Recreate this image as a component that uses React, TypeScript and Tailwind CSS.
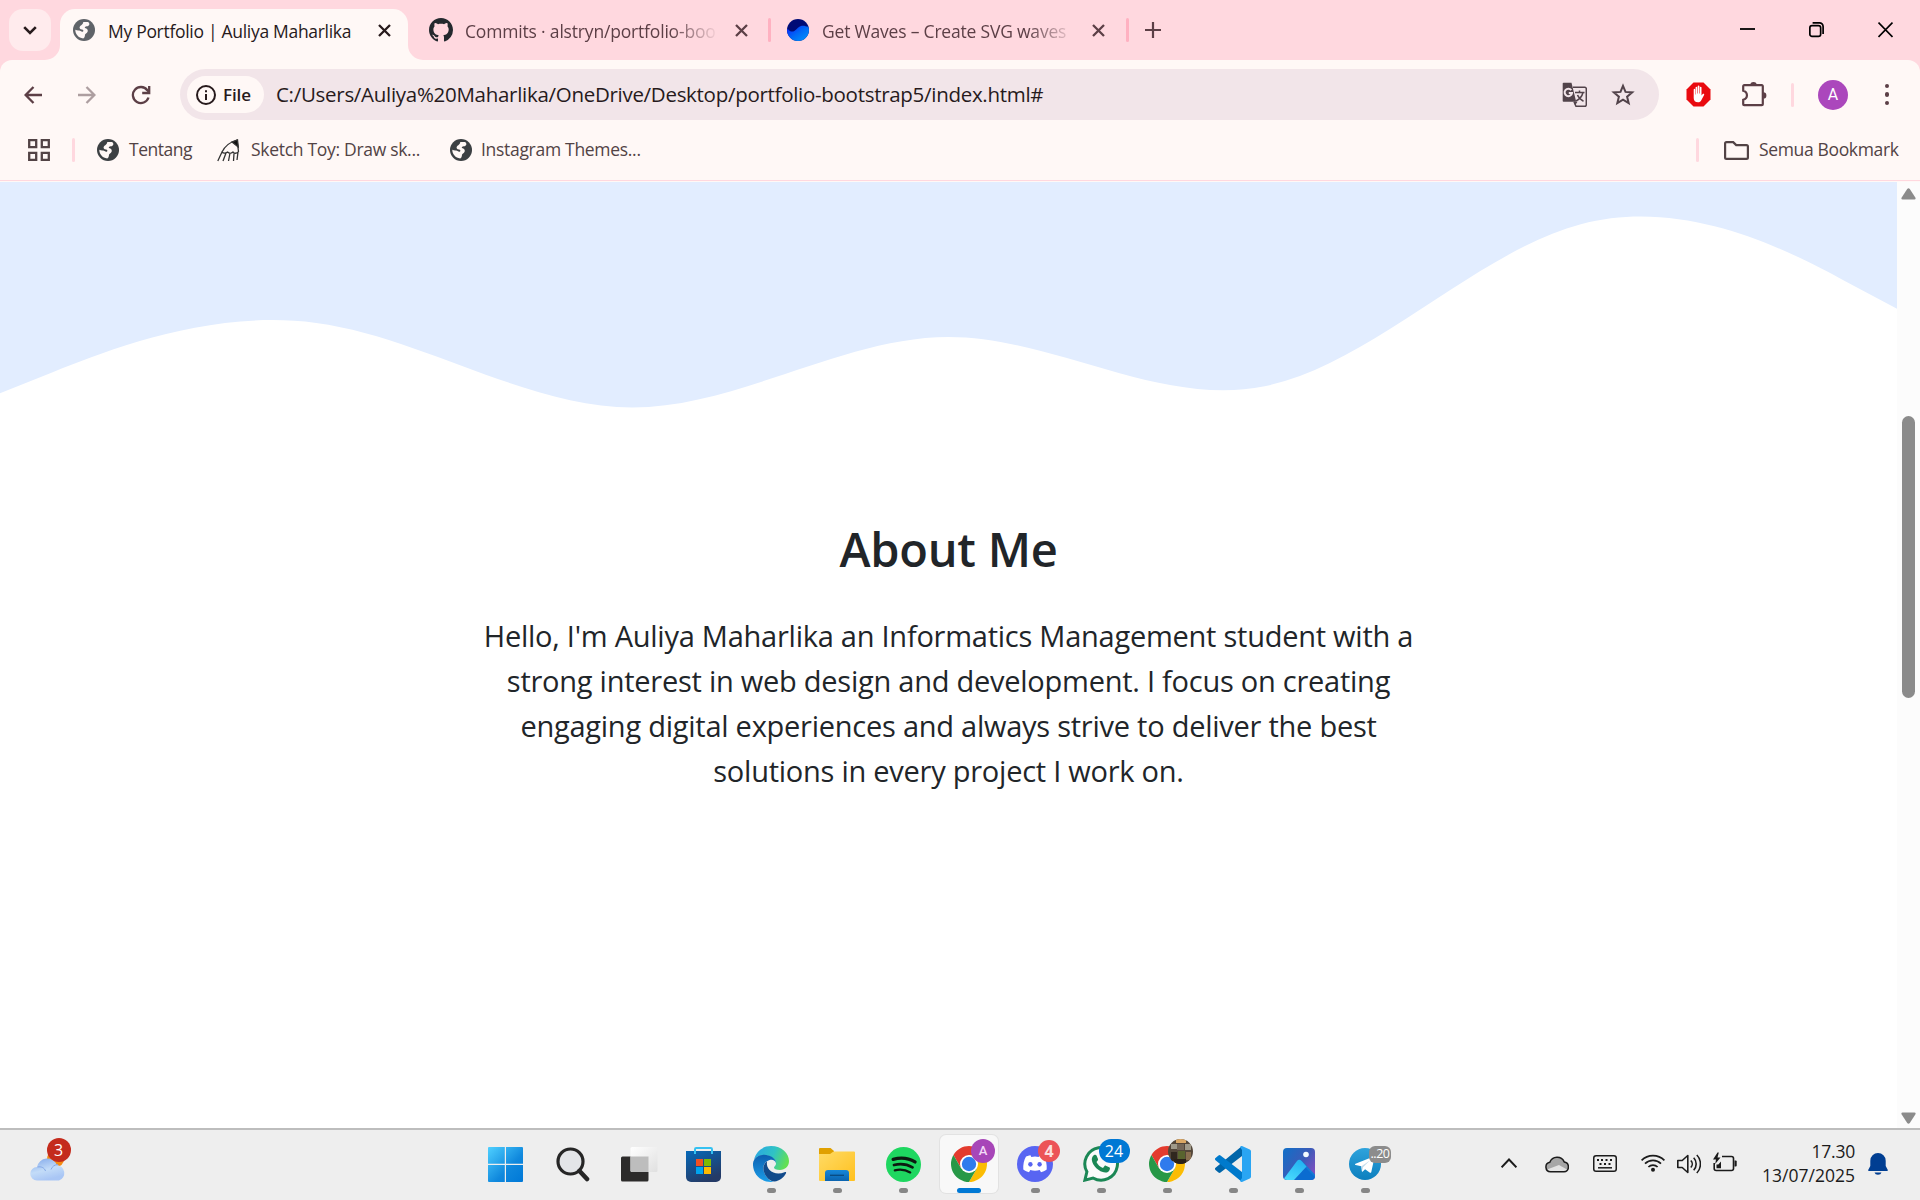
import React, { ReactNode } from "react";

function Globe({ className }: { className: string }) {
  return (
    <svg viewBox="0 0 22 22" className={`h-[22px] w-[22px] shrink-0 ${className}`}>
      <circle cx="11" cy="11" r="11" fill="currentColor" />
      <path
        d="M15.200 2.900C17.200 4.600 16.500 6.800 13.800 7.300 12.200 7.500 11.300 8.300 12 9.100c2 .3 3.200 1.700 2.700 3.400-.6 2-2.900 1.900-2.800 4-.1 1.500-.8 2.500-1.700 3C5.500 19 2.300 15.300 2.300 10.800c2 1 3.700.3 5.200 1.100 1 .6 1.700 1.300 2.600.6.700-.8.1-1.600-1.100-1.900C7 10.200 6 9 6.900 7.500 8 5.800 9.800 6 10.300 2.900z"
        fill="#fff8f6"
      />
    </svg>
  );
}

function Cross({ className }: { className?: string }) {
  return (
    <svg viewBox="0 0 13 13" className={`h-[13px] w-[13px] shrink-0 ${className ?? ""}`} fill="none" stroke="currentColor" strokeWidth="2.3">
      <path d="M1 1l11 11M12 1L1 12" />
    </svg>
  );
}

function TabStrip() {
  return (
    <div className="flex h-[60px] bg-[#ffd8df] text-[17.5px] leading-6">
      <button className="mt-[9px] ml-[9px] flex h-[42px] w-[42px] items-center justify-center rounded-[14px] bg-[#ffebed]">
        <svg viewBox="0 0 14 9" className="h-[9px] w-[14px]" fill="none" stroke="#271a1c" strokeWidth="2.6">
          <path d="M1.200 1.200L7 7l5.800-5.800" />
        </svg>
      </button>
      <div className="relative mt-[9px] ml-[9px] flex h-[51px] w-[348px] items-start rounded-t-[15px] bg-[#fff8f6] text-[#271a1c]">
        <svg viewBox="0 0 15 15" className="absolute bottom-0 left-[-15px] h-[15px] w-[15px]" fill="#fff8f6">
          <path d="M15 0v15H0A15 15 0 0 0 15 0z" />
        </svg>
        <svg viewBox="0 0 15 15" className="absolute right-[-15px] bottom-0 h-[15px] w-[15px]" fill="#fff8f6">
          <path d="M0 0v15h15A15 15 0 0 1 0 0z" />
        </svg>
        <Globe className="mt-[10px] ml-[13px] text-[#5f6368]" />
        <span className="mt-[10px] ml-[13px] w-[258px] whitespace-nowrap tracking-[-0.3px]">My Portfolio | Auliya Maharlika</span>
        <Cross className="mt-[15px] ml-[12px]" />
      </div>
      <div className="flex items-start text-[#5c3f46]">
        <svg viewBox="0 0 16 16" className="mt-[18px] ml-[21px] h-[24px] w-[24px]" fill="#24292e">
          <path d="M8 0C3.580 0 0 3.580 0 8c0 3.540 2.290 6.530 5.470 7.590.4.070.550-.170.550-.380 0-.190-.010-.820-.010-1.490-2.010.370-2.530-.490-2.690-.940-.090-.230-.480-.940-.820-1.130-.280-.150-.680-.520-.010-.530.630-.010 1.080.580 1.230.820.720 1.210 1.870.870 2.330.660.070-.520.280-.870.510-1.070-1.780-.200-3.640-.890-3.640-3.950 0-.870.310-1.590.820-2.150-.080-.200-.360-1.020.080-2.120 0 0 .670-.210 2.200.820.640-.180 1.320-.270 2-.270s1.360.090 2 .270c1.530-1.040 2.200-.820 2.200-.820.440 1.100.160 1.920.080 2.120.510.560.820 1.270.820 2.150 0 3.070-1.870 3.750-3.650 3.950.290.250.540.730.540 1.480 0 1.070-.010 1.930-.010 2.200 0 .210.150.460.550.380A8.010 8.010 0 0 0 16 8c0-4.420-3.580-8-8-8z" />
        </svg>
        <span className="mt-[19px] ml-[12px] w-[253px] overflow-hidden whitespace-nowrap tracking-[-0.180px] [mask-image:linear-gradient(to_right,black_205px,transparent_254px)]">
          Commits · alstryn/portfolio-boo
        </span>
        <Cross className="mt-[24px] ml-[17px]" />
        <div className="mt-[18px] ml-[20px] h-[24px] w-[3px] rounded-full bg-[#ffb1c1]" />
        <svg viewBox="0 0 22 22" className="mt-[19px] ml-[16px] h-[22px] w-[22px]">
          <defs>
            <linearGradient id="sea" x1="0" y1="0" x2="1" y2="1">
              <stop offset="0" stopColor="#0a1cff" />
              <stop offset=".5" stopColor="#0069f5" />
              <stop offset="1" stopColor="#0099ff" />
            </linearGradient>
          </defs>
          <circle cx="11" cy="11" r="11" fill="#000b76" />
          <path d="M.8 9.500C2 12 3.800 12.800 6 12.500c3-.5 4.500-4.500 8-5.500 2.700-.7 5 .4 7.300.8.500 1 .7 2.200.7 3.200a11 11 0 0 1-22 0z" fill="url(#sea)" />
        </svg>
        <span className="mt-[19px] ml-[13px] w-[253px] overflow-hidden whitespace-nowrap tracking-[-0.200px] [mask-image:linear-gradient(to_right,black_205px,transparent_254px)]">
          Get Waves – Create SVG waves
        </span>
        <Cross className="mt-[24px] ml-[17px]" />
        <div className="mt-[18px] ml-[21px] h-[24px] w-[3px] rounded-full bg-[#ffb1c1]" />
        <svg viewBox="0 0 16 16" className="mt-[22px] ml-[16px] h-[16px] w-[16px]" stroke="currentColor" strokeWidth="2.200">
          <path d="M8 0v16M0 8h16" />
        </svg>
      </div>
      <div className="mr-[27px] ml-auto flex items-start gap-[54px] text-black">
        <svg viewBox="0 0 15 16" className="mt-[22px] h-[16px] w-[15px]" stroke="currentColor" strokeWidth="1.800">
          <path d="M0 7h15" />
        </svg>
        <svg viewBox="0 0 15 16" className="mt-[22px] h-[16px] w-[15px]" fill="none" stroke="currentColor" strokeWidth="1.700">
          <rect x=".85" y="3.600" width="10.800" height="10.800" rx="2.200" />
          <path d="M3.600.85H10.500a3.600 3.600 0 0 1 3.600 3.600V12" />
        </svg>
        <svg viewBox="0 0 15 16" className="mt-[22px] h-[16px] w-[15px]" stroke="currentColor" strokeWidth="1.700">
          <path d="M.5.600l14 14.400M14.500.600L.5 15" />
        </svg>
      </div>
    </div>
  );
}

function Toolbar() {
  return (
    <div className="bg-[#ffd8df]">
      <div className="flex h-[69px] items-center rounded-t-[12px] bg-[#fff8f6] text-[#5c3f46]">
        <svg viewBox="0 0 18 18" className="ml-[24px] h-[18px] w-[18px]" fill="none" stroke="currentColor" strokeWidth="2.300">
          <path d="M18 9H1.800M9.500 1L1.600 9l7.900 8" />
        </svg>
        <svg viewBox="0 0 18 18" className="ml-[36px] h-[18px] w-[18px] text-[#ad9ea0]" fill="none" stroke="currentColor" strokeWidth="2.300">
          <path d="M0 9h16.200M8.500 1l7.900 8-7.900 8" />
        </svg>
        <svg viewBox="0 0 20 20" className="ml-[35px] h-[20px] w-[20px]" fill="none" stroke="currentColor" strokeWidth="2.300">
          <path d="M17.500 12.500A8 8 0 1 1 16.300 5.200L18 7" />
          <path d="M18.200 1v7h-7" />
        </svg>
        <div className="ml-[29px] flex h-[51px] w-[1479px] items-center rounded-full bg-[#f2e5e9]">
          <div className="ml-[7px] flex h-[37px] w-[77px] items-center rounded-full bg-[#fff8f6] text-[#271a1c]">
            <svg viewBox="0 0 20 20" className="ml-[9px] h-[20px] w-[20px]" fill="none" stroke="currentColor" strokeWidth="2">
              <circle cx="10" cy="10" r="9" />
              <path d="M10 9v6M10 5.200v2" />
            </svg>
            <span className="ml-[7px] text-[17px] leading-6 font-semibold tracking-[-0.1px]">File</span>
          </div>
          <span className="mb-[1px] ml-[12px] text-[20.5px] leading-7 tracking-[-0.290px] whitespace-nowrap text-[#271a1c]">
            C:/Users/Auliya%20Maharlika/OneDrive/Desktop/portfolio-bootstrap5/index.html#
          </span>
          <svg viewBox="0 0 25 25" className="ml-auto h-[25px] w-[25px]" fill="none" stroke="#52434a" strokeWidth="1.500">
            <path d="M11 5.300h11.800a1.500 1.500 0 0 1 1.500 1.500v16a1.500 1.500 0 0 1-1.500 1.500H14l-2-4.500" />
            <path d="M13 10.500h9.500M17.500 8.500v2M21 10.500c-1 4-4 7-7 8.500M15.500 13c1 2.500 3.500 5 6 6.200" />
            <path d="M1.500.800h8l4.700 19H1.500a.8.800 0 0 1-.8-.8V1.600a.8.800 0 0 1 .8-.8z" fill="#52434a" stroke="none" />
            <path d="M12 19.800h3.500L13 23.500z" fill="#52434a" stroke="none" />
            <path d="M9.300 8.200A3.700 3.700 0 1 0 10 11H6.800" stroke="#f2e5e9" strokeWidth="2" />
          </svg>
          <svg viewBox="0 0 24 23" className="mr-[24px] ml-[24px] h-[23px] w-[24px]" fill="none" stroke="#52434a" strokeWidth="2">
            <path d="M12 2.800l2.500 6.100 6.700.5-5.100 4.300 1.600 6.500L12 16.700l-5.700 3.500 1.600-6.500-5.100-4.300 6.700-.5z" />
          </svg>
        </div>
        <svg viewBox="0 0 25 25" className="ml-[27px] h-[25px] w-[25px]">
          <path d="M7.500.500h10l7 7v10l-7 7h-10l-7-7v-10z" fill="#e90a0f" />
          <path
            d="M7.700 7.500c0-.9 1.500-.9 1.500 0v5h.4V5.500c0-1 1.600-1 1.600 0v6h.5V4.200c0-1 1.700-1 1.700 0v7.300h.5V5.500c0-1 1.600-1 1.600 0v8l1.200-1.400c.7-.8 1.900-.1 1.400.8l-2.800 5.400c-.8 1.500-1.800 2-3.200 2-2.900 0-4.400-1.500-4.400-4.300z"
            fill="#fff"
          />
        </svg>
        <svg viewBox="0 0 25 25" className="ml-[31px] h-[25px] w-[25px]" fill="none" stroke="currentColor" strokeWidth="2.200">
          <path d="M2.500 3.200h17.300a1 1 0 0 1 1 1v18a1 1 0 0 1-1 1H2.200a1 1 0 0 1-1-1v-4.500c5-1.500 5-7.500 0-9V4.200a1 1 0 0 1 1-1z" />
          <path d="M8.300 3a3.200 3 0 0 1 6.400 0zM21.200 10.200a3.200 3.200 0 0 1 0 6.400z" fill="currentColor" stroke="none" />
        </svg>
        <div className="ml-[24px] h-[24px] w-[3px] rounded-full bg-[#ffd8df]" />
        <div className="ml-[24px] flex h-[30px] w-[30px] items-center justify-center rounded-full bg-[#ab47bc] font-[Roboto] text-[16px] text-white">A</div>
        <div className="ml-[37px] flex flex-col gap-[4px]">
          <div className="h-[4.400px] w-[4.400px] rounded-full bg-current" />
          <div className="h-[4.400px] w-[4.400px] rounded-full bg-current" />
          <div className="h-[4.400px] w-[4.400px] rounded-full bg-current" />
        </div>
      </div>
    </div>
  );
}

function BookmarksBar() {
  return (
    <div className="h-[53px] bg-[#fff8f6]">
      <div className="flex h-[52px] items-start border-b border-[#ffd8df] text-[17.5px] leading-6 whitespace-nowrap text-[#524345]">
        <svg viewBox="0 0 22 22" className="mt-[10px] ml-[28px] h-[22px] w-[22px]" fill="none" stroke="currentColor" strokeWidth="2.300">
          <path d="M1.200 1.200h7v7h-7zM13.800 1.200h7v7h-7zM1.200 13.800h7v7h-7zM13.800 13.800h7v7h-7z" />
        </svg>
        <div className="mt-[9px] ml-[22px] h-[24px] w-[3px] rounded-full bg-[#ffd8df]" />
        <Globe className="mt-[10px] ml-[22px] text-[#3c4043]" />
        <span className="mt-[8px] ml-[10px] w-[87px] tracking-[-0.500px]">Tentang</span>
        <svg viewBox="0 0 23 24" className="mt-[9px] ml-[1px] h-[24px] w-[23px]" fill="none" stroke="#333" strokeWidth="1.300">
          <path d="M5 14C8 8 13 4 20 2l1.500 11.500c-1.500 2.500-4.500 2-5.500.5-1.500 1.500-4 1.500-5.500 0-1.500 1-4 1.500-5.500 0zM5 14L.800 23M9 15L6 23M13 15l-1.500 8M17 15.500L16.500 23M21 14l-1 8" />
          <path d="M15 4l5.500-2 .8 7z" fill="#111" />
        </svg>
        <span className="mt-[8px] ml-[11px] w-[190px] tracking-[-0.300px]">Sketch Toy: Draw sk...</span>
        <Globe className="mt-[10px] ml-[9px] text-[#3c4043]" />
        <span className="mt-[8px] ml-[9px] tracking-[-0.300px]">Instagram Themes...</span>
        <div className="mr-[21px] ml-auto flex items-start">
          <div className="mt-[9px] h-[24px] w-[3px] rounded-full bg-[#ffd8df]" />
          <svg viewBox="0 0 25 19" className="mt-[12px] ml-[25px] h-[19px] w-[25px]" fill="none" stroke="currentColor" strokeWidth="2.200">
            <path d="M2.500 1.100h6.700l3 3h10.300a1.400 1.400 0 0 1 1.400 1.400v11a1.400 1.400 0 0 1-1.400 1.400h-20a1.400 1.400 0 0 1-1.400-1.400v-14A1.400 1.400 0 0 1 2.500 1.100z" />
          </svg>
          <span className="mt-[8px] ml-[10px] w-[140px] tracking-[-0.350px]">Semua Bookmark</span>
        </div>
      </div>
    </div>
  );
}

function Page() {
  return (
    <div className="flex h-[946px]">
      <main className="w-[1897px] bg-white text-[#212529]">
        <svg viewBox="0 0 1440 231" preserveAspectRatio="none" className="h-[305px] w-full" fill="#e2edff">
          <path d="M0 160L40 144C80 128 160 96 240 106.700C320 117.300 400 170.700 480 170.700C560 170.700 640 117.300 720 117.300C800 117.300 880 170.700 960 154.700C1040 138.700 1120 53.300 1200 32C1280 10.700 1360 53.300 1400 74.700L1440 96V0H0z" />
        </svg>
        <section className="pt-[33px] text-center">
          <h2 className="text-[47px] leading-[58px] font-semibold tracking-[-0.250px]">About Me</h2>
          <p className="mt-[35px] text-[29px] leading-[45px] tracking-[-0.250px]">
            Hello, I'm Auliya Maharlika an Informatics Management student with a
            <br />
            strong interest in web design and development. I focus on creating
            <br />
            engaging digital experiences and always strive to deliver the best
            <br />
            solutions in every project I work on.
          </p>
        </section>
      </main>
      <div className="flex flex-1 flex-col items-center bg-[#fcfcfc] text-[#8b8b8b]">
        <svg viewBox="0 0 15 12" className="mt-[6px] h-[12px] w-[15px]" fill="currentColor">
          <path d="M6.200 1q1.300-1.600 2.600 0l5.500 8.500q1 2-1 2H1.700q-2 0-1-2z" />
        </svg>
        <div className="mt-[216px] h-[282px] w-[13px] rounded-full bg-[#8b8b8b]" />
        <svg viewBox="0 0 15 12" className="mt-auto mb-[4px] h-[12px] w-[15px]" fill="currentColor">
          <path d="M6.200 11q1.300 1.600 2.600 0l5.500-8.500q1-2-1-2H1.700q-2 0-1 2z" />
        </svg>
      </div>
    </div>
  );
}

function TaskItem({ children, open, active }: { children: ReactNode; open?: boolean; active?: boolean }) {
  return (
    <div
      className={`relative mx-[4px] mt-[5px] flex h-[58px] w-[58px] items-center justify-center rounded-[6px] ${
        active ? "bg-[#f8f8f8] ring-1 ring-[#e2e2e2]" : ""
      }`}
    >
      {children}
      {open && <div className="absolute bottom-0 left-[25px] h-[5px] w-[9px] rounded-full bg-[#868686]" />}
      {active && <div className="absolute bottom-0 left-[17px] h-[5px] w-[24px] rounded-full bg-[#0078d4]" />}
    </div>
  );
}

function Chrome() {
  return (
    <svg viewBox="0 0 48 48" className="h-[36px] w-[36px]">
      <circle cx="24" cy="24" r="24" fill="#fff" />
      <path d="M24 12h20.780A24 24 0 0 0 3.220 12L13.610 30 24 12z" fill="#e33b2e" />
      <path d="M34.390 30L24 48A24 24 0 0 0 44.780 12H24z" fill="#fbbc04" />
      <path d="M13.610 30L3.220 12A24 24 0 0 0 24 48l10.390-18z" fill="#279847" />
      <circle cx="24" cy="24" r="12" fill="#fff" />
      <circle cx="24" cy="24" r="9.600" fill="#2f7bed" />
    </svg>
  );
}

function Taskbar() {
  return (
    <div className="flex h-[72px] items-start border-t-2 border-[#bdbdbd] bg-[#eee] text-[#1b1b1b]">
      <div className="relative mt-[27px] ml-[30px] h-[24px] w-[36px]">
        <div className="absolute top-[-6px] left-[17px] h-[16px] w-[17px] rounded-full bg-[#f58a12]" />
        <svg viewBox="0 0 36 24" className="absolute inset-0 h-[24px] w-[36px]">
          <defs>
            <linearGradient id="cloud" x1="0" y1="0" x2=".4" y2="1">
              <stop offset="0" stopColor="#7fa6ea" />
              <stop offset=".6" stopColor="#c3dcf8" />
              <stop offset="1" stopColor="#a9c6f5" />
            </linearGradient>
          </defs>
          <path d="M7 10a10.500 10.500 0 0 1 20-2 8 8 0 0 1 2 15.500H7A6.700 6.700 0 0 1 7 10z" fill="url(#cloud)" />
          <path d="M7.500 10c4-.8 7 1 8 4M21 12.500a8 8 0 0 1 7-5" fill="none" stroke="#83a7e6" strokeWidth="1" />
        </svg>
        <div className="absolute top-[-19px] left-[16.500px] flex h-[24px] w-[24px] items-center justify-center rounded-full bg-[#c42b1c] text-[16px] leading-none text-white">3</div>
      </div>

      <div className="ml-[408px] flex">
        <TaskItem>
          <svg viewBox="0 0 35 35" className="mr-[4px] h-[35px] w-[35px]">
            <defs>
              <linearGradient id="win" x1="0" y1="0" x2="1" y2="1">
                <stop offset="0" stopColor="#4fd0ff" />
                <stop offset=".6" stopColor="#0f88dd" />
                <stop offset="1" stopColor="#0078d7" />
              </linearGradient>
            </defs>
            <path d="M1 0h15.800v16.800H0V1a1 1 0 0 1 1-1zM18 0h16a1 1 0 0 1 1 1v15.800H18zM0 18h16.800v17H1a1 1 0 0 1-1-1zM18 18h17v16a1 1 0 0 1-1 1H18z" fill="url(#win)" />
          </svg>
        </TaskItem>
        <TaskItem>
          <svg viewBox="0 0 34 35" className="h-[35px] w-[34px]" fill="none" stroke="#262626">
            <circle cx="14.500" cy="14.500" r="12.500" fill="#e3e5e8" strokeWidth="3.200" />
            <path d="M23.500 24l7.500 8" strokeWidth="4.600" strokeLinecap="round" />
          </svg>
        </TaskItem>
        <TaskItem>
          <svg viewBox="0 0 37 35" className="h-[35px] w-[37px]">
            <defs>
              <linearGradient id="pane" x1="0" y1="0" x2="1" y2="1">
                <stop offset="0" stopColor="#fff" />
                <stop offset="1" stopColor="#e0e0e0" />
              </linearGradient>
            </defs>
            <rect y="9.500" width="27.500" height="25" rx="1.500" fill="#2c2b2a" />
            <rect x="9.500" width="27" height="25" rx="1.500" fill="url(#pane)" />
            <path d="M9.500 9.500h18V25h-16.500a1.500 1.500 0 0 1-1.500-1.500z" fill="#bdbdbd" />
          </svg>
        </TaskItem>
        <TaskItem>
          <svg viewBox="0 0 35 35" className="mr-[3px] h-[35px] w-[35px]">
            <defs>
              <linearGradient id="bag" x1="0" y1="0" x2=".5" y2="1">
                <stop offset="0" stopColor="#0669b9" />
                <stop offset="1" stopColor="#243a66" />
              </linearGradient>
            </defs>
            <path d="M0 4h35v26a5 5 0 0 1-5 5H5a5 5 0 0 1-5-5z" fill="url(#bag)" />
            <path d="M9 7V2.200A1.200 1.200 0 0 1 10.200 1h14.600A1.200 1.200 0 0 1 26 2.200V7" fill="none" stroke="#35c1f1" strokeWidth="2" />
            <path d="M10 12h7v7h-7z" fill="#f25022" />
            <path d="M18 12h7v7h-7z" fill="#7fba00" />
            <path d="M10 20h7v7h-7z" fill="#00a4ef" />
            <path d="M18 20h7v7h-7z" fill="#ffb900" />
          </svg>
        </TaskItem>
        <TaskItem open>
          <svg viewBox="0 0 36 36" className="h-[36px] w-[36px]">
            <defs>
              <linearGradient id="edgeTop" x1="0" y1=".2" x2="1" y2=".5">
                <stop offset="0" stopColor="#2aa7e4" />
                <stop offset=".55" stopColor="#30c3c4" />
                <stop offset="1" stopColor="#63e052" />
              </linearGradient>
              <linearGradient id="edgeLeft" x1="0" y1="0" x2="0" y2="1">
                <stop offset="0" stopColor="#0c5fb0" />
                <stop offset="1" stopColor="#1b9de8" />
              </linearGradient>
            </defs>
            <path d="M1 14C3 5 10 0 18 0c11 0 18 7.500 18 15 0 5.500-4 9-9 9-4 0-6-1.200-6-2.500S23 20 23 17.500C23 13 18 10 12 9 7 8.500 3 11 1 14z" fill="url(#edgeTop)" />
            <path d="M0 17.500C.5 11.500 6 8.700 11 8.700c6.500 0 12 3.800 12 8.300-1-3-3.500-3.500-5.500-3.200C12 15 9 20 11 26s7 10 10 9.700C9 37.500-.5 28.500 0 17.500z" fill="url(#edgeLeft)" />
            <path d="M14 15.500C11 17.500 9.500 21 11 26c1.700 5.500 6 9.200 10.500 9.600 5-.6 9.500-4 11.500-8.300.5-1.200-.5-1.600-1.500-1.100C22 30.500 12.500 24 14 15.500z" fill="#114a8b" />
          </svg>
        </TaskItem>
        <TaskItem open>
          <svg viewBox="0 0 36 33" className="h-[33px] w-[36px]">
            <defs>
              <linearGradient id="folder" x1="0" y1="0" x2="1" y2="1">
                <stop offset="0" stopColor="#ffdb66" />
                <stop offset="1" stopColor="#ffc01e" />
              </linearGradient>
              <linearGradient id="pocket" x1="0" y1="0" x2="0" y2="1">
                <stop offset="0" stopColor="#1687d9" />
                <stop offset="1" stopColor="#0b64b0" />
              </linearGradient>
            </defs>
            <path d="M0 1a1 1 0 0 1 1-1h10.500l3.500 3v4H0z" fill="#e0a000" />
            <path d="M0 6h11l3.500-2.500H35a1 1 0 0 1 1 1V32a1 1 0 0 1-1 1H1a1 1 0 0 1-1-1z" fill="url(#folder)" />
            <path d="M6 33v-8a3 3 0 0 1 3-3h18a3 3 0 0 1 3 3v8z" fill="url(#pocket)" />
            <path d="M11 27.300h14" stroke="#0a4a80" strokeWidth="1.300" />
          </svg>
        </TaskItem>
        <TaskItem open>
          <svg viewBox="0 0 35 35" className="h-[35px] w-[35px]" fill="none" stroke="#0c1a10" strokeLinecap="round">
            <circle cx="17.500" cy="17.500" r="17.500" fill="#1ed760" stroke="none" />
            <path d="M7.200 12.300c7.500-2 15.500-1.200 21.800 2.600" strokeWidth="3.400" />
            <path d="M8 18c6.500-1.600 13-.8 18.500 2.400" strokeWidth="2.800" />
            <path d="M8.800 23.300c5.500-1.200 10.800-.6 15.400 2.100" strokeWidth="2.300" />
          </svg>
        </TaskItem>
        <TaskItem active>
          <Chrome />
          <div className="absolute top-[4px] left-[31px] flex h-[24px] w-[24px] items-center justify-center rounded-full bg-[#a746b8] font-[Roboto] text-[13px] font-medium text-[#f3d9f7]">A</div>
        </TaskItem>
        <TaskItem open>
          <svg viewBox="0 0 36 36" className="h-[36px] w-[36px]">
            <circle cx="18" cy="18" r="18" fill="#5865f2" />
            <path
              d="M13.500 9.300c-2 .3-3.800.9-4.600 1.500-2 3.300-2.900 8-2.600 12.700 1.900 1.500 3.900 2.300 5.700 2.700l1.300-2.200c3 .9 6.400.9 9.400 0l1.300 2.200c1.800-.4 3.800-1.200 5.700-2.700.3-4.700-.6-9.400-2.600-12.700-.8-.6-2.600-1.200-4.600-1.500l-.8 1.600a17 17 0 0 0-7.400 0z"
              fill="#fff"
            />
            <ellipse cx="13.400" cy="18.300" rx="2.200" ry="2.400" fill="#5865f2" />
            <ellipse cx="22.600" cy="18.300" rx="2.200" ry="2.400" fill="#5865f2" />
          </svg>
          <div className="absolute top-[5px] left-[32px] flex h-[22px] w-[22px] items-center justify-center rounded-full bg-[#ec5357] text-[16px] leading-none font-bold text-[#fbdede]">4</div>
        </TaskItem>
        <TaskItem open>
          <svg viewBox="0 0 36 36" className="h-[36px] w-[36px]">
            <path d="M1.900 34.100l2-8.300A16.300 16.300 0 1 1 10 32z" fill="#fafafa" stroke="#1b8755" strokeWidth="3" />
            <path
              d="M11.600 8.800c.7-.3 1.500-.2 1.900.7l1.500 3.400c.2.600 0 1.100-.3 1.500l-1.200 1.500c1.400 2.900 3.600 4.900 6.500 6l1.500-1.800c.4-.5.9-.6 1.400-.4l3.300 1.600c.6.300.9.800.7 1.600-.4 2.400-2.500 3.800-4.700 3.700-6.300-.5-12.800-7-13.400-12.800-.1-2.200 1-4.200 2.800-5z"
              fill="#1b8755"
            />
          </svg>
          <div className="absolute top-[4px] left-[26.500px] flex h-[24px] w-[31px] items-center justify-center rounded-full bg-[#0078d4] text-[16px] leading-none text-white">24</div>
        </TaskItem>
        <TaskItem open>
          <Chrome />
          <svg viewBox="0 0 25 25" className="absolute top-[4px] left-[29.500px] h-[25px] w-[25px]">
            <clipPath id="round">
              <circle cx="12.500" cy="12.500" r="12.500" />
            </clipPath>
            <g clipPath="url(#round)">
              <path d="M0 0h25v25H0z" fill="#54473a" />
              <path d="M8 0h10v4H8z" fill="#dba865" />
              <path d="M3 5h6v5H3zM17 5h6v6h-6z" fill="#a09a8a" />
              <path d="M9 5h7v6H9z" fill="#746657" />
              <path d="M3 13h6v9H3z" fill="#30271f" />
              <path d="M10 12h7v8h-7z" fill="#59642f" />
              <path d="M18 13h5v8h-5z" fill="#8a6f50" />
              <path d="M6 20h12v5H6z" fill="#2b2218" />
            </g>
          </svg>
        </TaskItem>
        <TaskItem open>
          <svg viewBox="0 0 36 36" className="h-[36px] w-[36px]">
            <path d="M27 0v10L5.500 26.500a1.500 1.500 0 0 1-2 0L.5 24a1.500 1.500 0 0 1 0-2.200z" fill="#0065a9" />
            <path d="M27 36V26L5.500 9.500a1.500 1.500 0 0 0-2 0L.5 12a1.500 1.500 0 0 0 0 2.200z" fill="#007acc" />
            <path d="M27 0l7.800 3.500A2 2 0 0 1 36 5.400v25.200a2 2 0 0 1-1.200 1.900L27 36c-1 .2-1.700-.5-2-1l2-3V4l-2-3c.3-.6 1-1.200 2-1z" fill="#2aa5f3" />
          </svg>
        </TaskItem>
        <TaskItem open>
          <svg viewBox="0 0 32 32" className="h-[32px] w-[32px]">
            <defs>
              <linearGradient id="sky" x1="0" y1="0" x2="1" y2=".7">
                <stop offset="0" stopColor="#0f70c8" />
                <stop offset=".6" stopColor="#3c5bb8" />
                <stop offset="1" stopColor="#7c4fc0" />
              </linearGradient>
              <linearGradient id="peak" x1=".5" y1="0" x2="0" y2="1">
                <stop offset="0" stopColor="#25b5f2" />
                <stop offset="1" stopColor="#4bdcff" />
              </linearGradient>
            </defs>
            <rect width="32" height="32" rx="4" fill="url(#sky)" />
            <path d="M11 32l10.500-11.500q1.500-1.300 3 0L32 28a4 4 0 0 1-4 4z" fill="#0b6cd0" />
            <path d="M16 11.800q1.700 0 3 1.200L32 26.500v2.500l-9-9z" fill="#1479d4" />
            <path d="M1 30.500L14 13q2-2.300 4.500 0l5 5.500L11 32H4a4 4 0 0 1-3-1.500z" fill="url(#peak)" />
            <circle cx="23" cy="6.500" r="2.800" fill="#f4fbff" />
          </svg>
        </TaskItem>
        <TaskItem open>
          <svg viewBox="0 0 32 32" className="h-[32px] w-[32px]">
            <defs>
              <linearGradient id="plane" x1="0" y1="0" x2="0" y2="1">
                <stop offset="0" stopColor="#2ea3dc" />
                <stop offset="1" stopColor="#0d7fbe" />
              </linearGradient>
            </defs>
            <circle cx="16" cy="16" r="16" fill="url(#plane)" />
            <path d="M6.500 15.800L24 8.800c.9-.3 1.500.2 1.300 1.300l-3 13.800c-.2 1-.9 1.200-1.700.7l-4.500-3.300-2.300 2.200c-.5.500-.9.200-1-.4l-.5-4.800-5.700-1.300c-.8-.3-.8-.9-.1-1.200z" fill="#fff" />
            <path d="M12.500 18.200l8.700-5.900-7.200 7-.7 3.500z" fill="#c3dcec" />
          </svg>
          <div className="absolute top-[11px] left-[33px] flex h-[17px] w-[22px] items-center justify-center rounded-[6px] bg-[#8c8c8c] text-[12.500px] leading-none tracking-[-0.500px] text-white">..20</div>
        </TaskItem>
      </div>

      <div className="mr-[32px] ml-auto flex items-start">
        <svg viewBox="0 0 16 10" className="mt-[28px] h-[10px] w-[16px]" fill="none" stroke="currentColor" strokeWidth="1.900">
          <path d="M.6 9.300L8 1.500l7.400 7.800" />
        </svg>
        <svg viewBox="0 0 24 18" className="mt-[25px] ml-[28px] h-[18px] w-[24px]">
          <path d="M5.500 16.800A4.800 4.800 0 0 1 4.800 7.300a7.800 7.800 0 0 1 14.400-.4 5 5 0 0 1-.2 9.900z" fill="#a6a6a6" />
          <path d="M2 14.500l12-4.500 8 4.500-2 2.300H5z" fill="#e3e3e3" />
          <path d="M5.500 16.800A4.800 4.800 0 0 1 4.800 7.300a7.800 7.800 0 0 1 14.400-.4 5 5 0 0 1-.2 9.900z" fill="none" stroke="currentColor" strokeWidth="1.500" />
        </svg>
        <svg viewBox="0 0 24 17" className="mt-[25px] ml-[24px] h-[17px] w-[24px]" fill="none" stroke="currentColor" strokeWidth="1.500">
          <rect x=".75" y=".75" width="22.500" height="15.500" rx="2.300" />
          <path d="M4 5h2M8 5h2M12.500 5h2M17 5h2M6.500 9h2M11 9h2M15.500 9h2" strokeWidth="2" />
          <path d="M5 12.800h14" />
        </svg>
        <svg viewBox="0 0 24 18" className="mt-[24px] ml-[24px] h-[18px] w-[24px]" fill="none" stroke="currentColor" strokeWidth="1.700">
          <path d="M.6 6.300a16 16 0 0 1 22.800 0M4 9.700a11.300 11.300 0 0 1 16 0M7.400 13a6.500 6.500 0 0 1 9.200 0" />
          <circle cx="12" cy="15.700" r="2" fill="currentColor" stroke="none" />
        </svg>
        <svg viewBox="0 0 24 20" className="mt-[24px] ml-[12px] h-[20px] w-[24px]" fill="none" stroke="currentColor" strokeWidth="1.600" strokeLinejoin="round">
          <path d="M.8 6.500h4.400l5.600-5v17l-5.600-5H.8zM13.800 6.500a5 5 0 0 1 0 7M16.700 3.800a9 9 0 0 1 0 12.400M19.800 1a13 13 0 0 1 0 18" />
        </svg>
        <svg viewBox="0 0 24 20" className="mt-[22px] ml-[12px] h-[20px] w-[24px]" fill="none" stroke="currentColor" strokeWidth="1.600">
          <path d="M9 4.500h9.500a2 2 0 0 1 2 2v10a2 2 0 0 1-2 2H3.200a2 2 0 0 1-2-2V11" />
          <path d="M21.500 8.500h1.200a1 1 0 0 1 1 1v4a1 1 0 0 1-1 1h-1.200z" fill="currentColor" stroke="none" />
          <path d="M4.500.5L0 7.500h3L2.200 12 7.500 5.500h-3L5.800.5z" fill="currentColor" stroke="none" />
          <path d="M3.500 12.500h1.800L8 9.500v6.800H3.500z" fill="currentColor" stroke="none" />
        </svg>
        <div className="mt-[9px] ml-[23px] w-[95px] text-right text-[17.500px] leading-6 whitespace-nowrap">
          <div className="tracking-[-0.200px]">17.30</div>
          <div>13/07/2025</div>
        </div>
        <svg viewBox="0 0 20 24" className="mt-[22px] ml-[13px] h-[24px] w-[20px]" fill="#003e92">
          <path d="M10 1a7.700 7.700 0 0 1 7.700 7.700V14l2 3.700c.3.600 0 1.300-.7 1.300H1c-.7 0-1-.7-.7-1.300l2-3.700V8.700A7.700 7.700 0 0 1 10 1zM6.500 20.500h7a3.600 3 0 0 1-7 0z" />
        </svg>
      </div>
    </div>
  );
}

export default function App() {
  return (
    <div className="flex h-[1200px] w-[1920px] flex-col overflow-hidden bg-white font-['Open_Sans','Noto_Sans',sans-serif]">
      <TabStrip />
      <Toolbar />
      <BookmarksBar />
      <Page />
      <Taskbar />
    </div>
  );
}
